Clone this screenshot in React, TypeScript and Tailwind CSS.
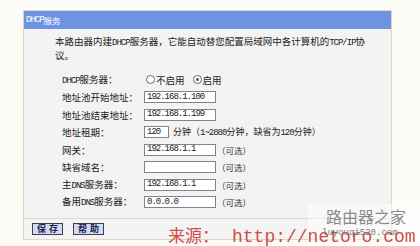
import React from "react";

const L = ({ children }: { children: React.ReactNode }) => (
  <span className="font-['Liberation_Mono'] text-[9px] tracking-[-1px]">{children}</span>
);

const Input = ({ value, w = "w-[72px]" }: { value: string; w?: string }) => (
  <div className={`${w} h-[12px] border border-[#7f8590] bg-white flex items-center pl-[2px] font-['Liberation_Mono'] text-[9px] tracking-[-1px] text-[#222] leading-none`}>
    {value}
  </div>
);

const Opt = () => (
  <span className="ml-[1px] text-[8.5px] text-[#333] whitespace-nowrap">（可选）</span>
);

const Row = ({ label, children }: { label: React.ReactNode; children: React.ReactNode }) => (
  <div className="h-[17.5px] flex items-center">
    <div className="w-[82px] whitespace-nowrap text-[#222]">{label}</div>
    <div className="flex items-center">{children}</div>
  </div>
);

const Radio = ({ checked }: { checked?: boolean }) => (
  <span className="w-[9px] h-[9px] rounded-full border border-[#5c6b80] bg-white flex items-center justify-center mr-[1px]">
    {checked && <span className="w-[3px] h-[3px] rounded-full bg-[#2d7a2d]" />}
  </span>
);

export default function App() {
  return (
    <div className="relative w-[420px] h-[246px] overflow-hidden bg-[#fdfbf6] pt-[10px] pl-[23px] font-['Noto_Sans_CJK_SC',sans-serif] text-[9.5px] leading-[12px]">
      <div className="w-[369px] h-[230px] border border-[#e3d3c2] bg-[#f3f3f3] flex flex-col">
        <div className="h-[18px] bg-[#6d94e2] text-white text-[8.5px] flex items-center pl-[2px] shrink-0">
          <L>DHCP</L>服务
        </div>
        <div className="flex-1 pl-[31px] pt-[6px] text-[#222]">
          <div className="whitespace-nowrap">
            本路由器内建<L>DHCP</L>服务器，它能自动替您配置局域网中各计算机的<L>TCP/IP</L>协
            <br />
            议。
          </div>
          <div className="pl-[7px] mt-[10px]">
            <Row label={<><L>DHCP</L>服务器：</>}>
              <div className="flex items-center ml-[2px]">
                <Radio />
                <span>不启用</span>
                <span className="w-[8px]" />
                <Radio checked />
                <span>启用</span>
              </div>
            </Row>
            <Row label="地址池开始地址：">
              <Input value="192.168.1.100" />
            </Row>
            <Row label="地址池结束地址：">
              <Input value="192.168.1.199" />
            </Row>
            <Row label="地址租期：">
              <Input value="120" w="w-[25px]" />
              <span className="ml-[4px] text-[9px] whitespace-nowrap">
                分钟（<L>1~2880</L>分钟，缺省为<L>120</L>分钟）
              </span>
            </Row>
            <Row label="网关：">
              <Input value="192.168.1.1" />
              <Opt />
            </Row>
            <Row label="缺省域名：">
              <Input value="" />
              <Opt />
            </Row>
            <Row label={<>主<L>DNS</L>服务器：</>}>
              <Input value="192.168.1.1" />
              <Opt />
            </Row>
            <Row label={<>备用<L>DNS</L>服务器：</>}>
              <Input value="0.0.0.0" />
              <Opt />
            </Row>
          </div>
        </div>
        <div className="h-[21px] border-t border-[#e3d3c2] flex items-center gap-[10px] pl-[8px] shrink-0">
          <div className="w-[31px] h-[12px] border border-[#3a3f55] bg-[#d5d9ef] flex items-center justify-center text-[9px] font-bold text-[#1c2350] tracking-[3px] pl-[3px]">
            保存
          </div>
          <div className="w-[31px] h-[12px] border border-[#3a3f55] bg-[#d5d9ef] flex items-center justify-center text-[9px] font-bold text-[#1c2350] tracking-[3px] pl-[3px]">
            帮助
          </div>
        </div>
      </div>

      <div className="absolute left-[308px] top-[204px] w-[112px] h-[42px] bg-white/50" />
      <div className="absolute left-[326px] top-[206px] text-[16px] leading-[20px] text-[#8a8a8a] whitespace-nowrap">
        路由器之家
      </div>
      <div className="absolute left-[168px] top-[224px] flex items-baseline whitespace-nowrap text-[#c8362f]/90 leading-[22px]">
        <span className="text-[17px]">来源：</span>
        <span className="font-['Liberation_Mono'] text-[18px] ml-[13px]">http://netoro.com</span>
      </div>
      <div className="absolute left-[322px] top-[227px] font-['Liberation_Mono'] text-[9px] leading-[12px] text-[#7a7a7a] whitespace-nowrap">
        luyouqi520.com
      </div>
    </div>
  );
}
